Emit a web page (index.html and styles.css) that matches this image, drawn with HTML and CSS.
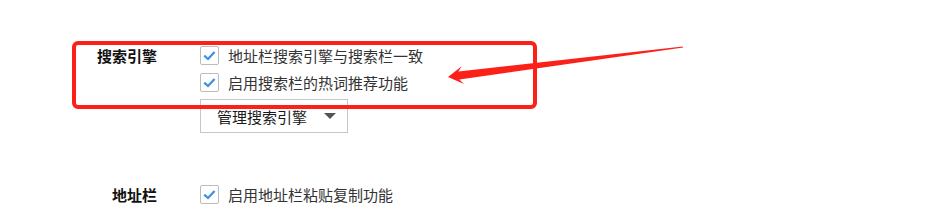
FILE: index.html
```html
<!DOCTYPE html>
<html lang="zh-CN">

<head>
    <meta charset="UTF-8">
    <title>设置</title>
    <link rel="stylesheet" href="styles.css">
</head>

<body>
    <div class="settings">
        <div class="section">
            <div class="section-label">搜索引擎</div>
            <div class="section-body">
                <label class="option">
                    <span class="check">
                        <svg width="19" height="19" viewBox="0 0 19 19"><path d="M4.3 9.6 L8 13 L14.6 6" /></svg>
                    </span>
                    地址栏搜索引擎与搜索栏一致
                </label>
                <label class="option">
                    <span class="check">
                        <svg width="19" height="19" viewBox="0 0 19 19"><path d="M4.3 9.6 L8 13 L14.6 6" /></svg>
                    </span>
                    启用搜索栏的热词推荐功能
                </label>
                <div class="select">
                    <span>管理搜索引擎</span>
                    <span class="caret"></span>
                </div>
            </div>
        </div>

        <div class="section section-next">
            <div class="section-label">地址栏</div>
            <div class="section-body">
                <label class="option">
                    <span class="check">
                        <svg width="19" height="19" viewBox="0 0 19 19"><path d="M4.3 9.6 L8 13 L14.6 6" /></svg>
                    </span>
                    启用地址栏粘贴复制功能
                </label>
            </div>
        </div>
    </div>

    <!-- annotation drawn over the screenshot -->
    <svg class="markup" width="943" height="211" viewBox="0 0 943 211">
        <rect x="74" y="43" width="461" height="64" rx="4" ry="4" fill="none" stroke="#fb2018" stroke-width="4" />
        <polygon fill="#fb2018"
            points="448,77 461.7,66.2 458.4,71.6 682.9,46.5 683.1,47.5 459.4,79.6 464,84 448,77" />
    </svg>
</body>

</html>
```

FILE: styles.css
```css
body {
    margin: 0;
    background: #ffffff;
    font-family: "Noto Sans CJK SC", "Noto Sans", sans-serif;
    font-size: 15px;
    color: #333333;
    position: relative;
    width: 943px;
    height: 211px;
    overflow: hidden;
}

.settings {
    padding-top: 42px;
}

.section {
    display: flex;
    gap: 43px;
}

.section-next {
    margin-top: 48px;
}

.section-label {
    width: 157px;
    flex: none;
    text-align: right;
    font-weight: bold;
    color: #111111;
    line-height: 27px;
}

.section-body {
    display: flex;
    flex-direction: column;
}

.option {
    display: flex;
    align-items: center;
    gap: 9px;
    height: 27px;
    line-height: 27px;
}

.check {
    flex: none;
    display: block;
    width: 19px;
    height: 19px;
    box-sizing: border-box;
    border: 1px solid #bcbcbc;
    border-radius: 2px;
    background: #ffffff;
    position: relative;
}

.check svg {
    position: absolute;
    left: -1px;
    top: -1px;
}

.check path {
    fill: none;
    stroke: #3d8fe6;
    stroke-width: 2.2;
}

.select {
    margin-top: 3px;
    width: 148px;
    height: 34px;
    box-sizing: border-box;
    border: 1px solid #c6c6c6;
    display: flex;
    align-items: center;
    justify-content: space-between;
    padding: 0 11px 0 16px;
    color: #1a1a1a;
}

.caret {
    width: 0;
    height: 0;
    border-left: 6px solid transparent;
    border-right: 6px solid transparent;
    border-top: 6px solid #555555;
}

.markup {
    position: absolute;
    left: 0;
    top: 0;
    pointer-events: none;
}
```
